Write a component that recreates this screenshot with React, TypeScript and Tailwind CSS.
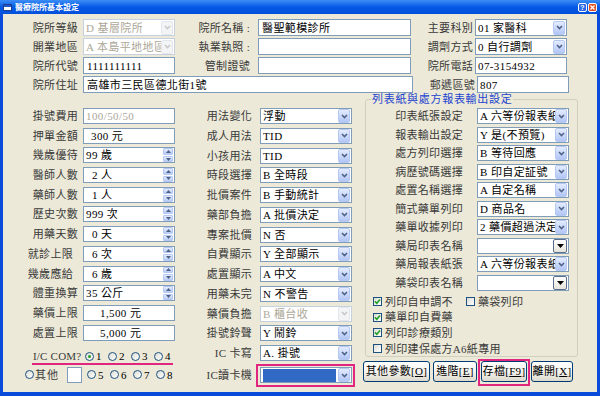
import React from 'react';

type Kind = 'input' | 'combo' | 'off' | 'sel' | 'pick' | 'spin';

function Arrow({ off }: { off?: boolean }) {
  return (
    <div
      className={
        off
          ? 'mr-[1px] flex h-[14px] w-[12px] shrink-0 items-center justify-center rounded-[2px] border border-[#E3E6EC] bg-[#F3F4F6]'
          : 'mr-[1px] flex h-[14px] w-[12px] shrink-0 items-center justify-center rounded-[2px] border border-[#B5C8F3] bg-linear-to-b from-[#E4ECFE] to-[#B2C6F5]'
      }
    >
      <svg width="7" height="5" viewBox="0 0 7 5">
        <path d="M1 1L3.5 3.6L6 1" fill="none" stroke={off ? '#C8C8C8' : '#4D6185'} strokeWidth="1.5" />
      </svg>
    </div>
  );
}

function Spin() {
  return (
    <div className="mr-[1px] flex h-[14px] w-[10px] shrink-0 flex-col gap-[1px]">
      {[0, 1].map((i) => (
        <div key={i} className="flex flex-1 items-center justify-center rounded-[1px] border border-[#B5C8F3] bg-linear-to-b from-[#E4ECFE] to-[#B8CBF6]">
          <svg width="5" height="3" viewBox="0 0 5 3">
            <path d={i === 0 ? 'M0 3L2.5 0L5 3Z' : 'M0 0L2.5 3L5 0Z'} fill="#4D6185" />
          </svg>
        </div>
      ))}
    </div>
  );
}

function Pick() {
  return (
    <div className="mr-[1px] flex h-[14px] w-[14px] shrink-0 items-center justify-center rounded-[2px] border border-[#5A6E8E] bg-linear-to-b from-white to-[#E6E4DA]">
      <svg width="7" height="4" viewBox="0 0 7 4">
        <path d="M0 0L3.5 4L7 0Z" fill="#000" />
      </svg>
    </div>
  );
}

function Field({
  kind = 'input',
  text = '',
  pad = 'pl-[2px]',
  gray = false,
  w = 'w-[92px]',
}: {
  kind?: Kind;
  text?: string;
  pad?: string;
  gray?: boolean;
  w?: string;
}) {
  const border = kind === 'off' ? 'border-[#C6D1DF]' : 'border-[#7F9DB9]';
  return (
    <div className={`flex h-full shrink-0 items-center overflow-hidden border bg-white ${border} ${w}`}>
      {kind === 'sel' ? (
        <div className="mx-[2px] h-[13px] min-w-0 flex-1 bg-[#316AC5]" />
      ) : (
        <div
          className={`min-w-0 flex-1 overflow-hidden whitespace-pre tracking-[0.4px] ${pad} ${
            gray || kind === 'off' ? 'text-[#ACA899]' : 'text-black'
          }`}
        >
          {text}
        </div>
      )}
      {(kind === 'combo' || kind === 'sel') && <Arrow />}
      {kind === 'off' && <Arrow off />}
      {kind === 'spin' && <Spin />}
      {kind === 'pick' && <Pick />}
    </div>
  );
}

function Check({ on }: { on?: boolean }) {
  return (
    <div className="flex h-[9px] w-[9px] shrink-0 items-center justify-center border border-[#1C5180] bg-linear-to-br from-[#DCDCD6] to-white">
      {on && (
        <svg width="7" height="7" viewBox="0 0 7 7">
          <path d="M1 3.4L2.8 5.2L6 1.4" fill="none" stroke="#21A121" strokeWidth="1.6" />
        </svg>
      )}
    </div>
  );
}

function Radio({ on }: { on?: boolean }) {
  return (
    <div className="flex h-[9px] w-[9px] shrink-0 items-center justify-center rounded-full border border-[#1C5180] bg-linear-to-br from-[#DCDCD6] to-white">
      {on && <div className="h-[3px] w-[3px] rounded-full bg-[#21A121]" />}
    </div>
  );
}

const topRows = [
  {
    a: '院所等級',
    af: <Field kind="off" text="D 基層院所" />,
    b: '院所名稱 :',
    bf: <Field w="w-[153px]" text="醫聖範模診所" pad="pl-[3px]" />,
    c: '主要科別',
    cf: <Field kind="combo" text="01 家醫科" />,
  },
  {
    a: '開業地區',
    af: <Field kind="off" text="A 本島平地地區" />,
    b: '執業執照 :',
    bf: <Field w="w-[153px]" />,
    c: '調劑方式',
    cf: <Field kind="combo" text="0 自行調劑" />,
  },
  {
    a: '院所代號',
    af: <Field text="1111111111" pad="pl-[3px]" />,
    b: '管制證號',
    bf: <Field w="w-[153px]" />,
    c: '院所電話',
    cf: <Field text="07-3154932" />,
  },
];

const leftRows: [string, Kind, string, string, string?][] = [
  ['掛號費用', 'input', '100/50/50', 'pl-[2px]', 'gray'],
  ['押單金額', 'input', '300 元', 'pl-[7px]'],
  ['幾歲優待', 'spin', '99 歲', 'pl-[2px]'],
  ['醫師人數', 'spin', '2 人', 'pl-[8px]'],
  ['藥師人數', 'spin', '1 人', 'pl-[8px]'],
  ['歷史次數', 'spin', '999 次', 'pl-[2px]'],
  ['用藥天數', 'spin', '0 天', 'pl-[8px]'],
  ['就診上限', 'spin', '6 次', 'pl-[8px]', 'in'],
  ['幾歲應給', 'spin', '6 歲', 'pl-[8px]', 'in'],
  ['體重換算', 'spin', '35 公斤', 'pl-[2px]'],
  ['藥價上限', 'input', '1,500 元', 'pl-[16px]'],
  ['處置上限', 'input', '5,000 元', 'pl-[16px]'],
];

const midRows: [string, Kind, string][] = [
  ['用法變化', 'combo', '浮動'],
  ['成人用法', 'combo', 'TID'],
  ['小孩用法', 'combo', 'TID'],
  ['時段選擇', 'combo', 'B 全時段'],
  ['批價案件', 'combo', 'B 手動統計'],
  ['藥部負擔', 'combo', 'A 批價決定'],
  ['專案批價', 'combo', 'N 否'],
  ['自費顯示', 'combo', 'Y 全部顯示'],
  ['處置顯示', 'combo', 'A 中文'],
  ['用藥未完', 'combo', 'N 不警告'],
  ['藥價負擔', 'off', 'B 櫃台收'],
  ['掛號鈴聲', 'combo', 'Y 鬧鈴'],
  ['IC 卡寫', 'combo', 'A. 掛號'],
];

const rightRows: [string, Kind, string][] = [
  ['印表紙張設定', 'combo', 'A 六等份報表紙'],
  ['報表輸出設定', 'combo', 'Y 是(不預覽)'],
  ['處方列印選擇', 'combo', 'B 等待回應'],
  ['病歷號碼選擇', 'combo', 'B 印自定証號'],
  ['處置名稱選擇', 'combo', 'A 自定名稱'],
  ['簡式藥單列印', 'combo', 'D 商品名'],
  ['藥單收據列印', 'combo', '2 藥價超過決定'],
  ['藥局印表名稱', 'pick', ''],
  ['藥局報表紙張', 'combo', 'A 六等份報表紙'],
  ['藥袋印表名稱', 'pick', ''],
];

function Btn({ pre, k, w }: { pre: string; k: string; w: string }) {
  return (
    <div
      className={`flex h-[21px] shrink-0 items-center justify-center rounded-[3px] border border-[#003C74] bg-linear-to-b from-white via-[#F5F4EF] to-[#DCD8CC] tracking-[0.3px] ${w}`}
    >
      {pre}[<span className="underline underline-offset-1">{k}</span>]
    </div>
  );
}

export default function App() {
  return (
    <div className="flex h-[396px] w-[600px] flex-col overflow-hidden bg-[#0B4BD9] font-['Liberation_Serif','Noto_Sans_CJK_TC',serif] text-[11px] leading-[14px]">
      {/* title bar */}
      <div className="flex h-[14px] shrink-0 items-center bg-linear-to-b from-[#3C8DF5] via-[#0459E6] to-[#0350DA] pl-[3px] pr-[3px]">
        <div className="flex h-[7px] w-[9px] flex-col border border-[#1B3F8F] bg-white">
          <div className="h-[2px] bg-[#2356C9]" />
        </div>
        <div className="ml-[3px] font-['Noto_Sans_CJK_TC',sans-serif] text-[8px] font-bold leading-none text-white">
          醫療院所基本設定
        </div>
        <div className="ml-auto flex gap-[1px]">
          <div className="flex h-[9px] w-[9px] items-center justify-center rounded-[2px] border border-white bg-[#2D68E8] font-['Liberation_Sans',sans-serif] text-[7px] font-bold leading-none text-white">
            ?
          </div>
          <div className="flex h-[9px] w-[9px] items-center justify-center rounded-[2px] border border-white bg-[#DF4F26]">
            <svg width="5" height="5" viewBox="0 0 5 5">
              <path d="M0.5 0.5L4.5 4.5M4.5 0.5L0.5 4.5" stroke="#fff" strokeWidth="1.3" />
            </svg>
          </div>
        </div>
      </div>

      {/* body */}
      <div className="mx-[3px] flex-1 bg-[#ECE9D8] text-[#3A3A3A]">
        {/* top section */}
        <div className="flex flex-col gap-[2px] pt-[5px]">
          {topRows.map((r) => (
            <div key={r.a} className="flex h-[17px] items-center">
              <div className="w-[75px] shrink-0 text-right tracking-[0.3px]">{r.a}</div>
              <div className="ml-[5px] h-full">{r.af}</div>
              <div className="w-[77px] shrink-0 whitespace-pre pr-[2px] text-right tracking-[0.3px]">{r.b}</div>
              <div className="ml-[6px] h-full">{r.bf}</div>
              <div className="w-[62px] shrink-0 text-right tracking-[0.3px]">{r.c}</div>
              <div className="ml-[2px] h-full">{r.cf}</div>
            </div>
          ))}
          <div className="flex h-[17px] items-center">
            <div className="w-[75px] shrink-0 text-right tracking-[0.3px]">院所住址</div>
            <div className="ml-[5px] h-full">
              <Field w="w-[330px]" text="高雄市三民區德北街1號" pad="pl-[3px]" />
            </div>
            <div className="w-[62px] shrink-0 text-right tracking-[0.3px]">郵遞區號</div>
            <div className="ml-[2px] h-full">
              <Field text="807" />
            </div>
          </div>
        </div>

        {/* main section */}
        <div className="flex">
          {/* left column */}
          <div className="flex w-[172px] shrink-0 flex-col pt-[15px]">
            <div className="flex flex-col gap-[3.7px]">
              {leftRows.map(([l, k, t, p, f]) => (
                <div key={l} className="flex h-[16px] items-center">
                  <div className={`w-[75px] shrink-0 text-right tracking-[0.3px] ${f === 'in' ? 'pr-[5px]' : ''}`}>{l}</div>
                  <div className="ml-[5px] h-full">
                    <Field kind={k} text={t} pad={p} gray={f === 'gray'} />
                  </div>
                </div>
              ))}
            </div>
            <div className="mt-[9px] flex h-[13px] items-center pl-[30px] text-black">
              <div className="w-[52px] shrink-0 whitespace-nowrap tracking-[0.2px] text-[#3A3A3A]">I/C COM?</div>
              {[1, 2, 3, 4].map((n) => (
                <div key={n} className="flex w-[23px] shrink-0 items-center gap-[2px]">
                  <Radio on={n === 1} />
                  <span>{n}</span>
                </div>
              ))}
            </div>
            <div className="ml-[29px] h-[2px] w-[141px] bg-[#E0267F]" />
            <div className="mt-[2px] flex h-[16px] items-center pl-[22px] text-black">
              <Radio />
              <span className="ml-[1px] w-[25px] shrink-0 whitespace-nowrap tracking-[1px] text-[#3A3A3A]">其他</span>
              <div className="ml-[7px] h-full w-[15px] shrink-0 border border-[#7F9DB9] bg-white" />
              <div className="ml-[5px] flex">
                {[5, 6, 7, 8].map((n) => (
                  <div key={n} className="flex w-[23px] shrink-0 items-center gap-[2px]">
                    <Radio />
                    <span>{n}</span>
                  </div>
                ))}
              </div>
            </div>
          </div>

          {/* middle column */}
          <div className="flex w-[177px] shrink-0 flex-col pt-[15px]">
            <div className="flex flex-col gap-[3.75px]">
              {midRows.map(([l, k, t]) => (
                <div key={l} className="flex h-[16px] items-center">
                  <div className="w-[77px] shrink-0 text-right tracking-[0.3px]">{l}</div>
                  <div className="ml-[8px] h-full">
                    <Field kind={k} text={t} />
                  </div>
                </div>
              ))}
            </div>
            <div className="mt-[6px] flex h-[16px] items-center">
              <div className="w-[77px] shrink-0 text-right tracking-[0.3px]">IC讀卡機</div>
              <div className="relative ml-[8px] h-full">
                <Field kind="sel" />
                <div className="pointer-events-none absolute -bottom-[4px] -left-[4px] -right-[3px] -top-[3px] border-2 border-[#E0267F]" />
              </div>
            </div>
          </div>

          {/* right column */}
          <div className="ml-[11px] flex w-[216px] shrink-0 flex-col">
            <fieldset className="ml-[2px] w-[213px] rounded-[3px] border border-[#D0D0BF] pb-[1px]">
              <legend className="ml-[5px] px-[1px] leading-[12px] tracking-[0.7px] text-[#1E44D0]">
                列表紙與處方報表輸出設定
              </legend>
              <div className="flex flex-col gap-[2.5px] pt-[3px]">
                {rightRows.map(([l, k, t]) => (
                  <div key={l} className="flex h-[16px] items-center">
                    <div className="w-[97px] shrink-0 text-right tracking-[0.3px]">{l}</div>
                    <div className="ml-[14px] h-full">
                      <Field kind={k} text={t} />
                    </div>
                  </div>
                ))}
              </div>
              <div className="mt-[5px] flex flex-col gap-[3.7px] pl-[7px]">
                <div className="flex h-[12px] items-center">
                  <Check on />
                  <span className="ml-[3px] w-[81px] shrink-0 tracking-[0.3px]">列印自申調不</span>
                  <Check />
                  <span className="ml-[3px] tracking-[0.3px]">藥袋列印</span>
                </div>
                <div className="flex h-[12px] items-center">
                  <Check on />
                  <span className="ml-[3px] tracking-[0.3px]">藥單印自費藥</span>
                </div>
                <div className="flex h-[12px] items-center">
                  <Check on />
                  <span className="ml-[3px] tracking-[0.3px]">列印診療類別</span>
                </div>
                <div className="flex h-[12px] items-center">
                  <Check />
                  <span className="ml-[3px] tracking-[0.3px]">列印建保處方A6紙專用</span>
                </div>
              </div>
            </fieldset>
            <div className="mt-[4px] flex text-black">
              <Btn pre="其他參數" k="O" w="w-[67px]" />
              <div className="ml-[3px]">
                <Btn pre="進階" k="E" w="w-[44px]" />
              </div>
              <div className="relative ml-[4px]">
                <Btn pre="存檔" k="F9" w="w-[46px]" />
                <div className="pointer-events-none absolute -bottom-[4px] -left-[3px] -right-[3px] -top-[2px] border-2 border-[#E0267F]" />
              </div>
              <div className="ml-[4px]">
                <Btn pre="離開" k="X" w="w-[42px]" />
              </div>
            </div>
          </div>
        </div>
      </div>
      <div className="h-[4px] shrink-0" />
    </div>
  );
}
